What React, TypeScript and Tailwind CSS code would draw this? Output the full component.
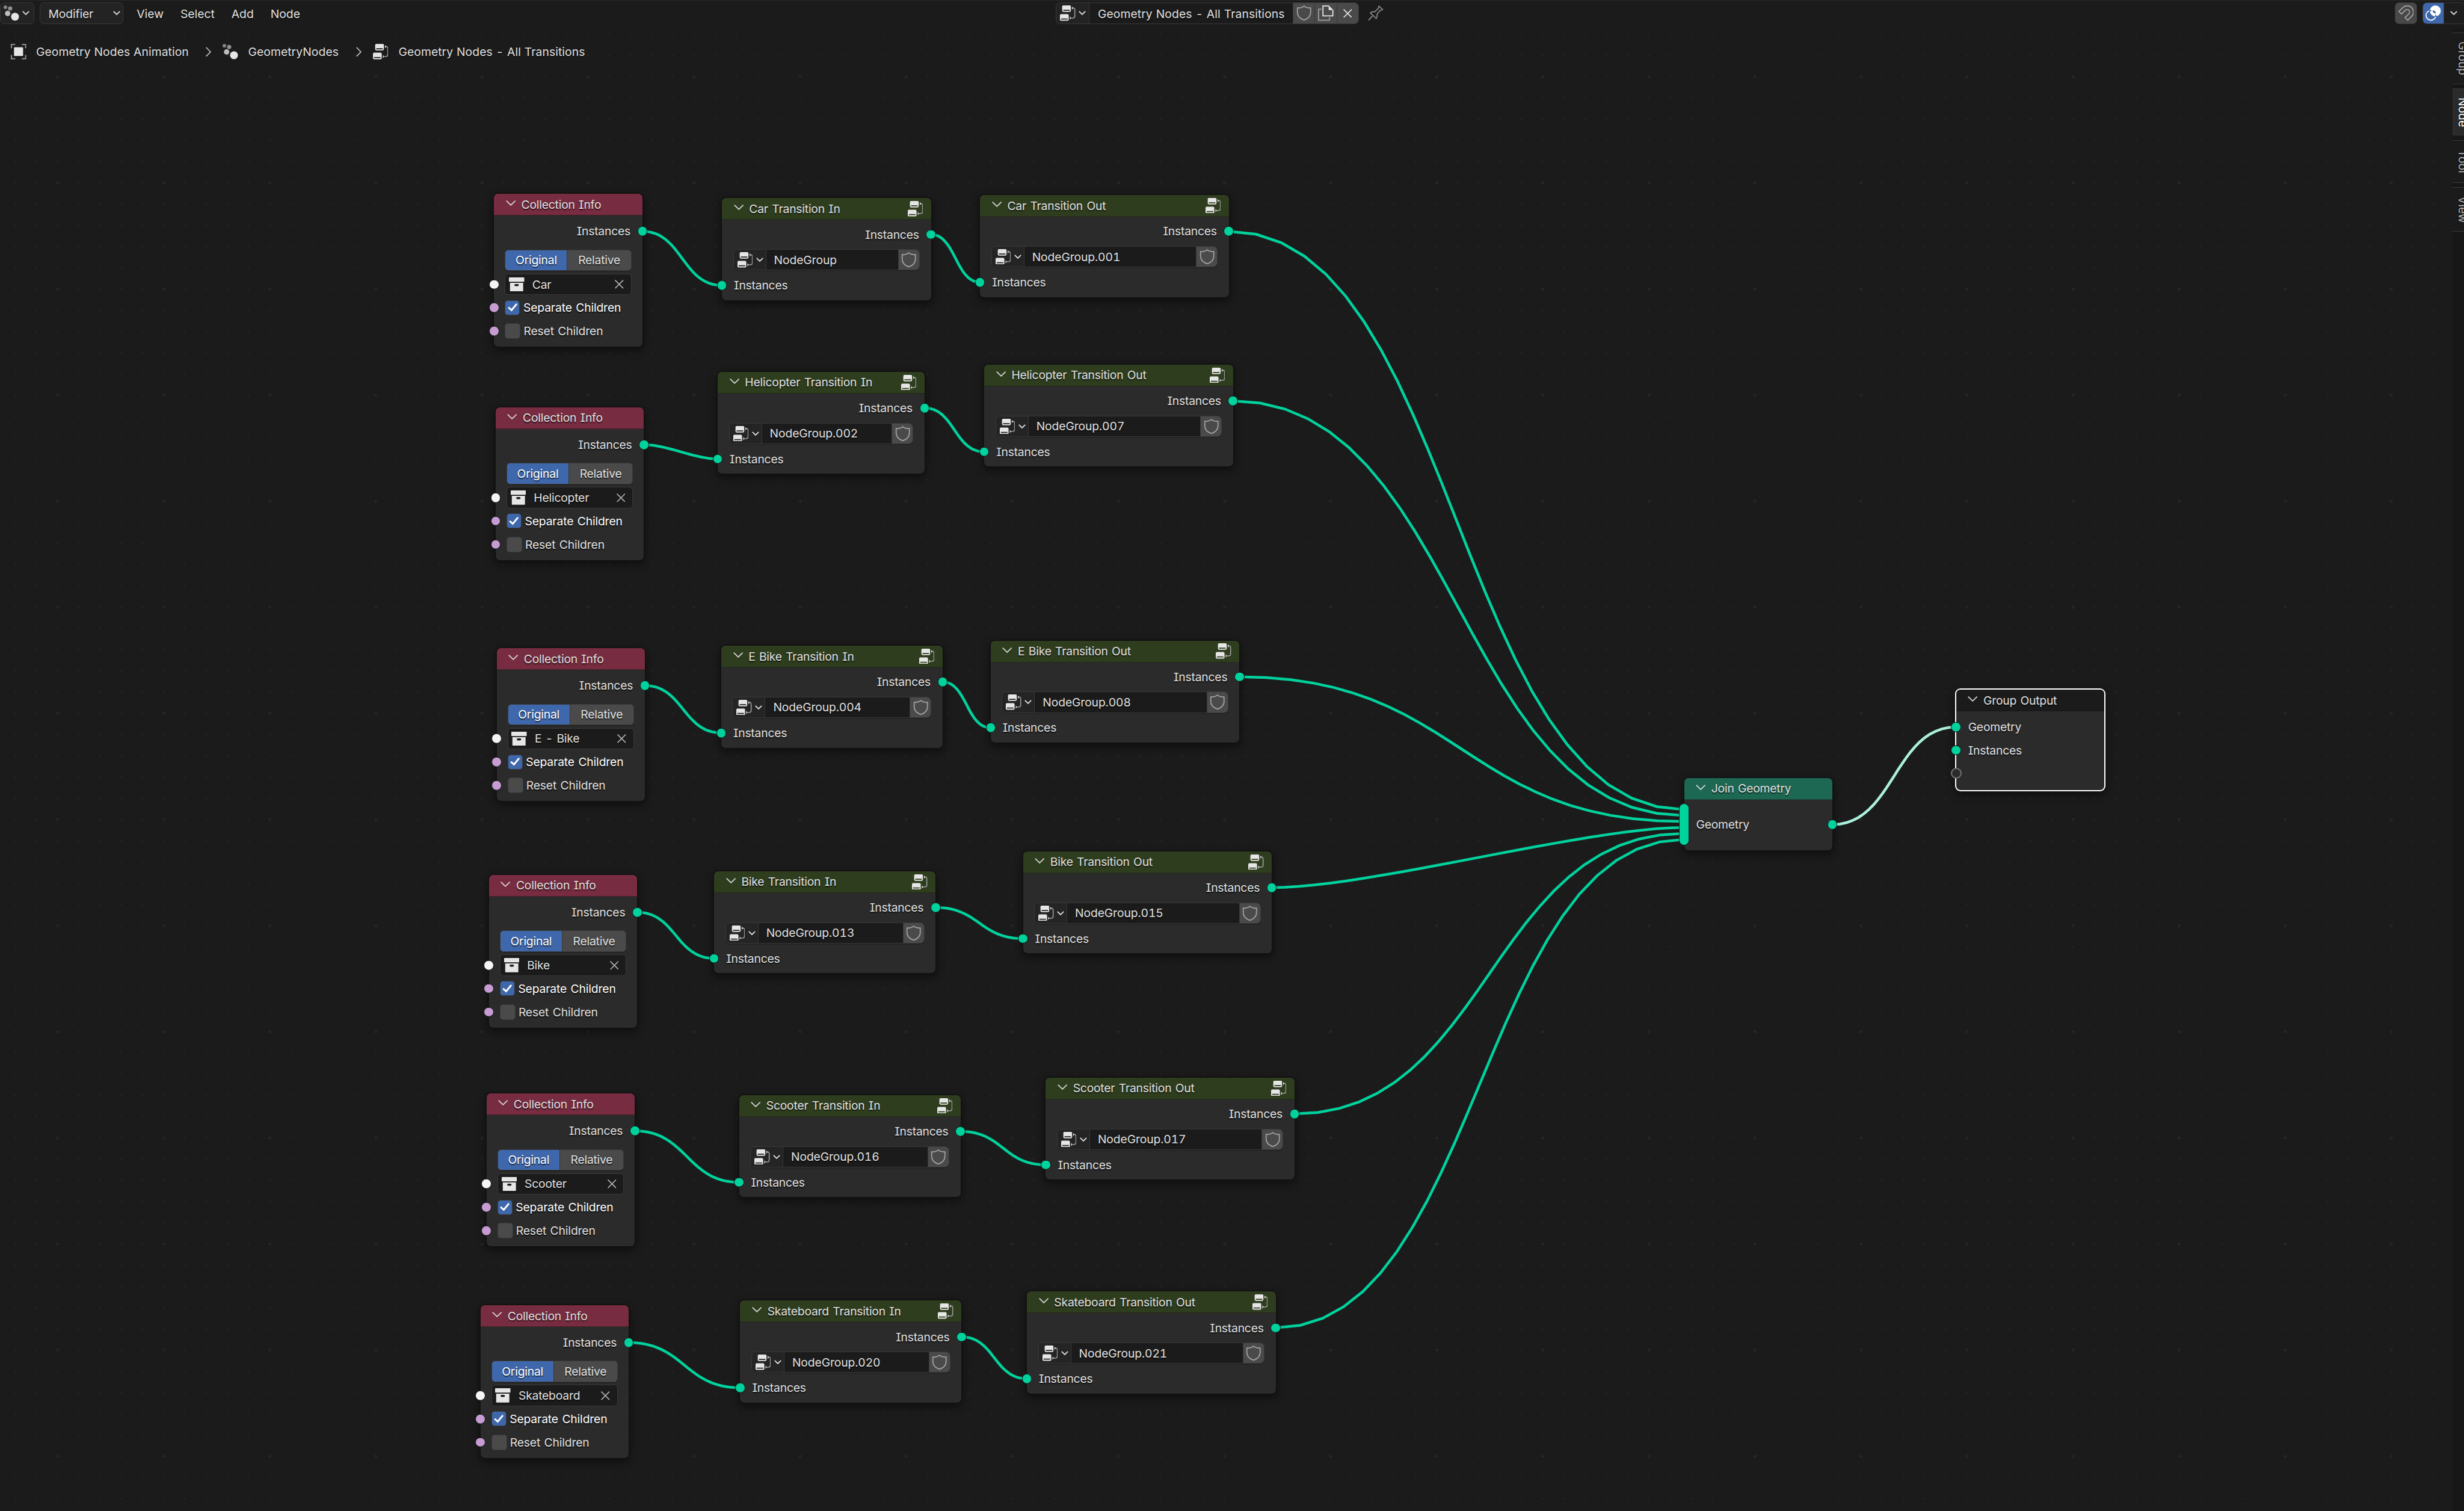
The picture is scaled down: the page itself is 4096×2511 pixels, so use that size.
import React from 'react';

// Node coordinates are kept in editor units, SCALE turns them into pixels
const SCALE = 0.90982;

const px = (v: number) => Math.round(v * SCALE * 10) / 10;

type Row = {
  name: string;
  collection: [number, number];
  input: { x: number; y: number; w: number; group: string };
  output: { x: number; y: number; w: number; group: string };
};

const rows: Row[] = [
  {
    name: 'Car',
    collection: [902.7, 354.3],
    input: { x: 1319, y: 362, w: 382, group: 'NodeGroup' },
    output: { x: 1790.7, y: 356.2, w: 454.6, group: 'NodeGroup.001' },
  },
  {
    name: 'Helicopter',
    collection: [905.4, 744],
    input: { x: 1311.4, y: 679, w: 378, group: 'NodeGroup.002' },
    output: { x: 1798.4, y: 666, w: 454.6, group: 'NodeGroup.007' },
  },
  {
    name: 'E - Bike',
    collection: [907.3, 1184],
    input: { x: 1317.7, y: 1179.3, w: 404.6, group: 'NodeGroup.004' },
    output: { x: 1810, y: 1170, w: 454.6, group: 'NodeGroup.008' },
  },
  {
    name: 'Bike',
    collection: [893.3, 1598],
    input: { x: 1304.9, y: 1591.3, w: 404.6, group: 'NodeGroup.013' },
    output: { x: 1869.2, y: 1555, w: 454.6, group: 'NodeGroup.015' },
  },
  {
    name: 'Scooter',
    collection: [888.8, 1997.3],
    input: { x: 1350.3, y: 2000.2, w: 404.6, group: 'NodeGroup.016' },
    output: { x: 1910.7, y: 1968.3, w: 454.6, group: 'NodeGroup.017' },
  },
  {
    name: 'Skateboard',
    collection: [877.6, 2384],
    input: { x: 1352.4, y: 2375.5, w: 404.6, group: 'NodeGroup.020' },
    output: { x: 1876.3, y: 2359, w: 454.6, group: 'NodeGroup.021' },
  },
];

const titles = (name: string) => (name === 'E - Bike' ? 'E Bike' : name);

const COLLECTION_W = 271.2;
const JOIN = { x: 3077, y: 1421, w: 271 };
const GROUP_OUTPUT = { x: 3574, y: 1260, w: 271 };

const SEGMENTS = 24;

// Bezier link flattened into straight segments, the handles shorten on flat links
const linkPoints = (x1: number, y1: number, x2: number, y2: number) => {
  const dx = Math.abs(x2 - x1);
  const slope = Math.abs(y2 - y1) / dx;
  const handle = 0.5 * dx * Math.min(1, slope * 3.25);
  const points: string[] = [];
  for (let i = 0; i <= SEGMENTS; i++) {
    const t = i / SEGMENTS;
    const u = 1 - t;
    const x = u * u * u * x1 + 3 * u * u * t * (x1 + handle) + 3 * u * t * t * (x2 - handle) + t * t * t * x2;
    const y = (u * u * u + 3 * u * u * t) * y1 + (3 * u * t * t + t * t * t) * y2;
    points.push(`${px(x)},${px(y)}`);
  }
  return points.join(' ');
};

/* ---------- icons ---------- */

const NodeTreeIcon = ({ className = '' }: { className?: string }) => (
  <svg viewBox="0 0 28 28" className={`size-[25.5px] shrink-0 ${className}`}>
    <path
      fill="#e6e6e6"
      fillRule="evenodd"
      d="M6 0H18a2 2 0 0 1 2 2V9.7a2 2 0 0 1-2 2H6a2 2 0 0 1-2-2V2a2 2 0 0 1 2-2ZM6 8V9.8H18V8ZM2 16H14a2 2 0 0 1 2 2V26a2 2 0 0 1-2 2H2a2 2 0 0 1-2-2V18a2 2 0 0 1 2-2ZM2 24V25.8H14V24Z"
    />
    <path fill="#e6e6e6" d="M22 2.2L24.6 5L22 7.8ZM18.2 20.2L20.8 23L18.2 25.8Z" />
    <path fill="none" stroke="#9a9a9a" strokeWidth="1.8" d="M24 4.4Q27.1 5 27.1 8V19.5Q27.1 23 23.5 23H20.5" />
  </svg>
);

const GeometryNodesIcon = () => (
  <svg viewBox="0 0 28 28" className="size-[25.5px] shrink-0">
    <circle cx="3.2" cy="3.4" r="3.3" fill="#868686" />
    <circle cx="12" cy="5.6" r="3.9" fill="#8f8f8f" />
    <circle cx="7.4" cy="14.6" r="4.9" fill="#bdbdbd" />
    <circle cx="20.8" cy="20.6" r="7.2" fill="#e6e6e6" />
  </svg>
);

const ObjectIcon = () => (
  <svg viewBox="0 0 28 28" className="size-[25.5px] shrink-0">
    <rect x="5.8" y="6" width="16.6" height="16" rx="1" fill="#e6e6e6" />
    <path fill="none" stroke="#9a9a9a" strokeWidth="2" d="M1 8V1H8M20 1H27V8M27 20V27H20M8 27H1V20" />
  </svg>
);

const CollectionIcon = () => (
  <svg viewBox="0 0 28 26" className="h-[23.7px] w-[25.5px] shrink-0">
    <rect width="28" height="8" rx="0.8" fill="#e6e6e6" />
    <path
      fill="#e6e6e6"
      fillRule="evenodd"
      d="M2 10H26V25.2a.8.8 0 0 1-.8.8H2.8a.8.8 0 0 1-.8-.8ZM12 12a2 2 0 0 0 0 4H16a2 2 0 0 0 0-4Z"
    />
  </svg>
);

const ShieldIcon = () => (
  <svg viewBox="0 0 28 28" className="size-[25.5px] shrink-0">
    <path
      fill="none"
      stroke="#a0a0a0"
      strokeWidth="2"
      d="M14 1.2C11 3.8 6 4.6 1.9 4.7V12.5C1.9 19 6.5 24 14 26.8C21.5 24 26.1 19 26.1 12.5V4.7C22 4.6 17 3.8 14 1.2Z"
    />
  </svg>
);

const CopyIcon = () => (
  <svg viewBox="0 0 28 28" className="size-[25.5px] shrink-0">
    <path fill="none" stroke="#a0a0a0" strokeWidth="1.9" d="M6.5 7H1V27H21V21.8" />
    <path fill="none" stroke="#e6e6e6" strokeWidth="2" d="M20 1H9V19H27V8.5" />
    <path fill="#e6e6e6" d="M19.4 0L28 8.6H19.4Z" />
  </svg>
);

const CloseIcon = ({ color = '#e6e6e6' }: { color?: string }) => (
  <svg viewBox="0 0 16 16" className="size-[14.6px] shrink-0">
    <path fill="none" stroke={color} strokeWidth="1.8" d="M0.6 0.6L15.4 15.4M15.4 0.6L0.6 15.4" />
  </svg>
);

const PinIcon = () => (
  <svg viewBox="0 0 28 28" className="size-[25.5px] shrink-0">
    <path
      fill="none"
      stroke="#8c8c8c"
      strokeWidth="1.9"
      strokeLinejoin="round"
      d="M0.8 27L8.3 19.3M4.2 13.6C7 11.8 10 11.2 12.4 11.6L19 5.4L20 1.2L26.8 7.6L22.6 9L16.6 15.6C17.4 18.4 17 21 15.2 23.8Z"
    />
  </svg>
);

const MagnetIcon = () => (
  <svg viewBox="0 0 28 28" className="size-[25.5px] shrink-0">
    <path
      fill="none"
      stroke="#a0a0a0"
      strokeWidth="2"
      strokeLinejoin="round"
      d="M1 11L8 4A11.2 11.2 0 0 1 24 20L17 27L12.2 22.2L19.2 15.2A4.6 4.6 0 0 0 12.6 8.8L5.6 15.7Z"
    />
  </svg>
);

const OverlayIcon = () => (
  <svg viewBox="0 0 28 28" className="size-[25.5px] shrink-0">
    <circle cx="9.9" cy="18.1" r="8.9" fill="none" stroke="#fff" strokeWidth="1.9" />
    <circle cx="18" cy="10" r="10.4" fill="#fff" stroke="#3f68ac" strokeWidth="1" />
    <ellipse cx="16" cy="12" rx="3.6" ry="1.7" fill="#3f68ac" transform="rotate(42 16 12)" />
    <path fill="none" stroke="#3f68ac" strokeWidth="1.8" d="M7 9.6H11M18.8 21V17" />
  </svg>
);

const DropIcon = () => (
  <svg viewBox="0 0 13 8" className="h-[7.3px] w-[12px] shrink-0">
    <path fill="none" stroke="#dcdcdc" strokeWidth="2" d="M0.8 0.9L6.5 6.6L12.2 0.9" />
  </svg>
);

const NodeChevron = () => (
  <svg viewBox="0 0 18 10" className="mb-[4px] h-[9px] w-[16.4px] shrink-0">
    <path fill="none" stroke="#d6d6d6" strokeWidth="1.9" d="M0.7 0.8L9 8.8L17.3 0.8" />
  </svg>
);

const CrumbChevron = () => (
  <svg viewBox="0 0 10 18" className="h-[16.4px] w-[9px] shrink-0">
    <path fill="none" stroke="#c8c8c8" strokeWidth="1.8" d="M0.8 0.7L8.8 9L0.8 17.3" />
  </svg>
);

/* ---------- node parts ---------- */

const Socket = ({ side, color = 'bg-[#00d29d]' }: { side: 'left' | 'right'; color?: string }) => (
  <span
    className={`absolute top-1/2 size-[16.6px] -translate-y-1/2 rounded-full border-[1.4px] border-[#161616] ${color} ${
      side === 'left' ? '-left-[8.3px]' : '-right-[8.3px]'
    }`}
  />
);

type NodeProps = {
  x: number;
  y: number;
  w: number;
  h: string;
  title: string;
  header: string;
  frame?: string;
  icon?: boolean;
  children: React.ReactNode;
};

const Node = ({ x, y, w, h, title, header, frame, icon, children }: NodeProps) => (
  <div
    className={`absolute flex flex-col rounded-[7px] bg-[#2b2b2b] tracking-[-0.2px] [word-spacing:1.4px] ${h} ${
      frame ?? 'shadow-[0_0_0_1.5px_#111111,0_5px_14px_2px_rgba(0,0,0,0.45)]'
    }`}
    style={{ left: px(x), top: px(y), width: px(w) }}
  >
    <div className={`flex h-[36px] shrink-0 items-center rounded-t-[7px] border-b-[1.5px] pl-[19.7px] ${header}`}>
      <NodeChevron />
      <span className="ml-[9.2px]">{title}</span>
      {icon && <NodeTreeIcon className="mr-[13.6px] ml-auto" />}
    </div>
    {children}
  </div>
);

const OutputRow = ({ className }: { className: string }) => (
  <div className={`relative flex h-[26px] shrink-0 items-center justify-end pr-[20px] ${className}`}>
    Instances
    <Socket side="right" />
  </div>
);

const InputRow = ({ label, className = '' }: { label: string; className?: string }) => (
  <div className={`relative flex h-[26px] shrink-0 items-center pl-[20px] ${className}`}>
    {label}
    <Socket side="left" />
  </div>
);

const CollectionInfo = ({ x, y, name }: { x: number; y: number; name: string }) => (
  <Node
    x={x}
    y={y}
    w={COLLECTION_W}
    h="h-[254px]"
    title="Collection Info"
    header="bg-[#782c41] border-[#4b1f2b]"
  >
    <OutputRow className="mt-[13.2px]" />
    <div className="mx-[18.2px] mt-[17.3px] flex h-[35.2px] shrink-0 overflow-hidden rounded-[6px] border-[1.8px] border-[#383838] bg-[#4a4a4a] shadow-[0_1.5px_0_rgba(0,0,0,0.2)]">
      <div className="flex w-[103px] items-center justify-center border-r-[1.8px] border-[#383838] bg-[#3f68ac] text-white">
        Original
      </div>
      <div className="flex flex-1 items-center justify-center">Relative</div>
    </div>
    <div className="relative mt-[4.8px] px-[18.2px]">
      <Socket side="left" color="bg-[#f5f5f5]" />
      <div className="flex h-[35.5px] items-center rounded-[6px] border-[1.8px] border-[#383838] bg-[#1b1b1b] pr-[12px] pl-[5.8px]">
        <CollectionIcon />
        <span className="ml-[13px]">{name}</span>
        <span className="ml-auto flex">
          <CloseIcon color="#b0b0b0" />
        </span>
      </div>
    </div>
    <div className="relative mt-[1.6px] flex h-[38.8px] shrink-0 items-center pl-[18.2px] text-white">
      <Socket side="left" color="bg-[#c69cd2]" />
      <span className="flex size-[25px] items-center justify-center rounded-[5px] border-[1.6px] border-[#383838] bg-[#3f68ac]">
        <svg viewBox="0 0 18 15" className="h-[13.6px] w-[16.4px]">
          <path fill="none" stroke="#fff" strokeWidth="3.2" d="M1.2 7.4L7 12.6L16.6 1" />
        </svg>
      </span>
      <span className="ml-[5.5px] tracking-[-0.14px]">Separate Children</span>
    </div>
    <div className="relative flex h-[38.8px] shrink-0 items-center pl-[18.2px]">
      <Socket side="left" color="bg-[#c69cd2]" />
      <span className="size-[26px] rounded-[5px] border-[1.6px] border-[#383838] bg-[#4a4a4a]" />
      <span className="ml-[5px] tracking-[-0.14px]">Reset Children</span>
    </div>
  </Node>
);

const GroupNode = ({ x, y, w, title, group }: { x: number; y: number; w: number; title: string; group: string }) => (
  <Node x={x} y={y} w={w} h="h-[169.5px]" title={title} header="bg-[#2f3d1f] border-[#212a17]" icon>
    <OutputRow className="mt-[11.3px]" />
    <div className="mx-[18.5px] mt-[11.6px] flex h-[35.2px] shrink-0 overflow-hidden rounded-[7px] border-[1.8px] border-[#383838] bg-[#242424] shadow-[0_1.5px_0_rgba(0,0,0,0.2)]">
      <div className="flex w-[54px] shrink-0 items-center border-r-[1.8px] border-[#383838] pl-[6px]">
        <NodeTreeIcon />
        <span className="ml-[5.5px] flex">
          <DropIcon />
        </span>
      </div>
      <div className="flex flex-1 items-center bg-[#1b1b1b] pl-[13px] tracking-[-0.1px]">{group}</div>
      <div className="flex w-[35px] shrink-0 items-center justify-center border-l-[1.2px] border-[#383838] bg-[#4a4a4a]">
        <ShieldIcon />
      </div>
    </div>
    <InputRow label="Instances" className="mt-[11.9px]" />
  </Node>
);

const JoinGeometry = () => (
  <Node x={JOIN.x} y={JOIN.y} w={JOIN.w} h="h-[120px]" title="Join Geometry" header="bg-[#1d6852] border-[#184a3c]">
    <div className="relative mt-[28.3px] flex h-[26px] items-center pl-[20px]">
      Geometry
      <span className="absolute top-1/2 -left-[8.3px] h-[70px] w-[16.6px] -translate-y-1/2 rounded-full border-[1.4px] border-[#161616] bg-[#00d29d]" />
      <Socket side="right" />
    </div>
  </Node>
);

const GroupOutput = () => (
  <Node
    x={GROUP_OUTPUT.x}
    y={GROUP_OUTPUT.y}
    w={GROUP_OUTPUT.w}
    h="h-[166.5px]"
    title="Group Output"
    header="bg-[#1b1b1b] border-[#191919]"
    frame="shadow-[0_0_0_2px_#ffffff,0_5px_14px_3px_rgba(0,0,0,0.5)]"
  >
    <InputRow label="Geometry" className="mt-[12.7px]" />
    <InputRow label="Instances" className="mt-[12.7px]" />
    <div className="relative mt-[12.7px] h-[26px]">
      <span className="absolute top-1/2 -left-[9px] size-[18px] -translate-y-1/2 rounded-full border-2 border-[#757575] bg-[#2b2b2b]" />
    </div>
  </Node>
);

/* ---------- canvas ---------- */

const Backdrop = () => (
  <svg width="4096" height="2511" className="absolute inset-0">
    <defs>
      <pattern id="dots" x="94.2" y="126" width="35.268" height="35.268" patternUnits="userSpaceOnUse">
        <circle cx="1.5" cy="1.5" r="1.5" fill="#242424" />
      </pattern>
      <pattern id="majorDots" x="93.4" y="125.2" width="176.34" height="176.34" patternUnits="userSpaceOnUse">
        <circle cx="2.4" cy="2.4" r="2.4" fill="#262626" />
      </pattern>
    </defs>
    <rect width="4096" height="2511" fill="url(#dots)" />
    <rect width="4096" height="2511" fill="url(#majorDots)" />
    <g fill="none" stroke="#00d29d" strokeWidth="4.5">
      {rows.map((row, i) => {
        const [cx, cy] = row.collection;
        const { input, output } = row;
        return (
          <g key={row.name}>
            <polyline points={linkPoints(cx + COLLECTION_W, cy + 68.3, input.x, input.y + 159.3)} />
            <polyline points={linkPoints(input.x + input.w, input.y + 66.3, output.x, output.y + 159.3)} />
            <polyline
              points={linkPoints(output.x + output.w, output.y + 66.3, JOIN.x, JOIN.y + 85 + (i - 2.5) * 10.9)}
            />
          </g>
        );
      })}
      <polyline
        stroke="#abf0dd"
        points={linkPoints(JOIN.x + JOIN.w, JOIN.y + 85, GROUP_OUTPUT.x, GROUP_OUTPUT.y + 68)}
      />
    </g>
  </svg>
);

const TopBar = () => (
  <div className="relative flex h-[46.5px] items-start border-t-[1.5px] border-[#282828] bg-[#1b1b1b] pt-[2.8px]">
    <div className="flex w-[1754.7px] shrink-0">
      <div className="flex h-[36.2px] w-[56.5px] items-center rounded-[7px] border-[1.8px] border-[#383838] bg-[#232323] pl-[5px]">
        <GeometryNodesIcon />
        <span className="ml-[5px] flex">
          <DropIcon />
        </span>
      </div>
      <div className="ml-[9.8px] flex h-[36.2px] w-[138.5px] items-center justify-between rounded-[7px] border-[1.8px] border-[#383838] bg-[#232323] pr-[4px] pl-[13.3px]">
        <span className="pt-[1.4px] tracking-[-0.15px]">Modifier</span>
        <DropIcon />
      </div>
      <div className="ml-[22.5px] flex h-[36.2px] items-center gap-[28px] pt-[1.4px]">
        <span>View</span>
        <span>Select</span>
        <span>Add</span>
        <span>Node</span>
      </div>
    </div>
    <div className="flex h-[36.2px] w-[504px] shrink-0 overflow-hidden rounded-[7px] border-[1.8px] border-[#383838] bg-[#232323]">
      <div className="flex w-[55.5px] items-center border-r-[1.8px] border-[#383838] pl-[6.5px]">
        <NodeTreeIcon />
        <span className="ml-[5.5px] flex">
          <DropIcon />
        </span>
      </div>
      <div className="flex flex-1 items-center bg-[#1b1b1b] pt-[1.4px] pl-[13.8px] tracking-[0.1px] [word-spacing:0.6px]">
        Geometry Nodes - All Transitions
      </div>
      <div className="flex w-[36.5px] items-center justify-center border-l-[1.8px] border-[#383838] bg-[#4a4a4a]">
        <ShieldIcon />
      </div>
      <div className="flex w-[36.5px] items-center justify-center border-l-[1.8px] border-[#383838] bg-[#4a4a4a]">
        <CopyIcon />
      </div>
      <div className="flex w-[36px] items-center justify-center border-l-[1.8px] border-[#383838] bg-[#4a4a4a]">
        <CloseIcon />
      </div>
    </div>
    <div className="ml-[15.4px] flex h-[36.2px] items-center">
      <PinIcon />
    </div>
    <div className="ml-auto flex overflow-hidden">
      <div className="flex size-[36.2px] items-center justify-center rounded-[7px] border-[1.8px] border-[#383838] bg-[#484848]">
        <MagnetIcon />
      </div>
      <div className="-mr-[2px] ml-[9.4px] flex h-[36.2px] w-[71px] overflow-hidden rounded-[7px] border-[1.8px] border-[#383838] bg-[#1d1d1d]">
        <div className="flex w-[34.6px] items-center justify-center border-r-[1.8px] border-[#383838] bg-[#3f68ac]">
          <OverlayIcon />
        </div>
        <span className="ml-[10.5px] flex items-center">
          <DropIcon />
        </span>
      </div>
    </div>
  </div>
);

const Breadcrumbs = () => (
  <div className="relative mt-[26px] flex h-[27px] items-center pl-[18.2px] tracking-[0.08px] [word-spacing:0.6px]">
    <ObjectIcon />
    <span className="ml-[16.3px] w-[252px]">Geometry Nodes Animation</span>
    <span className="mr-[19px] ml-[30.5px]">
      <CrumbChevron />
    </span>
    <GeometryNodesIcon />
    <span className="ml-[16.5px] w-[149px]">GeometryNodes</span>
    <span className="mr-[19px] ml-[30.5px]">
      <CrumbChevron />
    </span>
    <NodeTreeIcon />
    <span className="ml-[17px]">Geometry Nodes - All Transitions</span>
  </div>
);

const tabs = [
  { label: 'Group', size: 'h-[86px]', active: false },
  { label: 'Node', size: 'h-[78.5px]', active: true },
  { label: 'Tool', size: 'h-[71px]', active: false },
  { label: 'View', size: 'h-[74px]', active: false },
];

// The labels run past the window's edge, only their lower half is on screen
const SideTabs = () => (
  <div className="absolute top-[46.5px] right-0 bottom-0 flex w-[19px] flex-col gap-[7.2px] overflow-hidden bg-[#171717] pt-[7.3px]">
    {tabs.map((tab) => (
      <div
        key={tab.label}
        className={`shrink-0 border-y-[1.8px] border-[#383838] pl-[5px] ${tab.size} ${
          tab.active ? 'bg-[#2b2b2b] text-white' : 'bg-[#1b1b1b] text-[#b4b4b4]'
        }`}
      >
        <span className="block h-full w-[24px] text-center leading-[24px] [writing-mode:vertical-rl]">{tab.label}</span>
      </div>
    ))}
  </div>
);

const App: React.FC = () => {
  return (
    <div className="relative h-[2511px] w-[4096px] overflow-hidden bg-[#1b1b1b] font-[Inter,sans-serif] text-[19.3px] leading-[24px] whitespace-nowrap text-[#e0e0e0] [font-feature-settings:'cv08','tnum'] [text-shadow:0_1.5px_1.5px_rgba(0,0,0,0.7)]">
      <Backdrop />
      {rows.map((row) => (
        <React.Fragment key={row.name}>
          <CollectionInfo x={row.collection[0]} y={row.collection[1]} name={row.name} />
          <GroupNode {...row.input} title={`${titles(row.name)} Transition In`} />
          <GroupNode {...row.output} title={`${titles(row.name)} Transition Out`} />
        </React.Fragment>
      ))}
      <JoinGeometry />
      <GroupOutput />
      <TopBar />
      <Breadcrumbs />
      <SideTabs />
    </div>
  );
};

export default App;
